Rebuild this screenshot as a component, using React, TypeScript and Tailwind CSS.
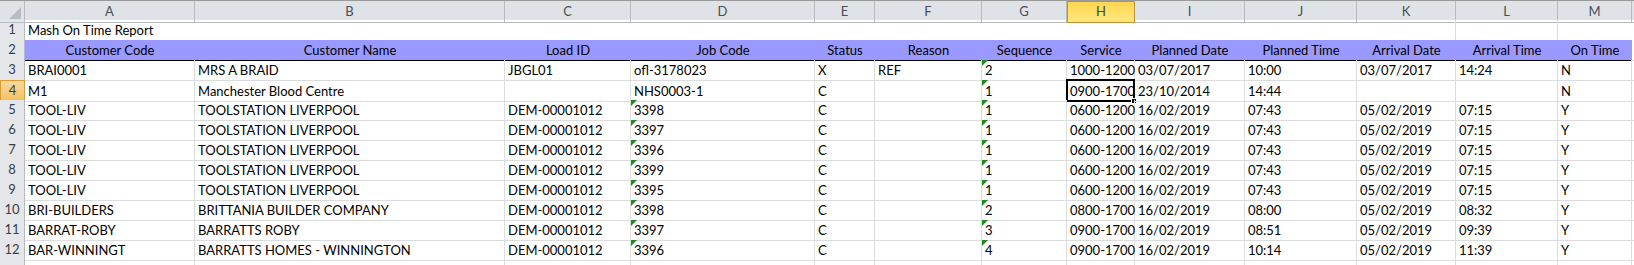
const cols = ['A', 'B', 'C', 'D', 'E', 'F', 'G', 'H', 'I', 'J', 'K', 'L', 'M'];

const headers = [
  'Customer Code',
  'Customer Name',
  'Load ID',
  'Job Code',
  'Status',
  'Reason',
  'Sequence',
  'Service',
  'Planned Date',
  'Planned Time',
  'Arrival Date',
  'Arrival Time',
  'On Time',
];

const rows: string[][] = [
  ['BRAI0001', 'MRS A BRAID', 'JBGL01', 'ofl-3178023', 'X', 'REF', '2', '1000-1200', '03/07/2017', '10:00', '03/07/2017', '14:24', 'N'],
  ['M1', 'Manchester Blood Centre', '', 'NHS0003-1', 'C', '', '1', '0900-1700', '23/10/2014', '14:44', '', '', 'N'],
  ['TOOL-LIV', 'TOOLSTATION LIVERPOOL', 'DEM-00001012', '3398', 'C', '', '1', '0600-1200', '16/02/2019', '07:43', '05/02/2019', '07:15', 'Y'],
  ['TOOL-LIV', 'TOOLSTATION LIVERPOOL', 'DEM-00001012', '3397', 'C', '', '1', '0600-1200', '16/02/2019', '07:43', '05/02/2019', '07:15', 'Y'],
  ['TOOL-LIV', 'TOOLSTATION LIVERPOOL', 'DEM-00001012', '3396', 'C', '', '1', '0600-1200', '16/02/2019', '07:43', '05/02/2019', '07:15', 'Y'],
  ['TOOL-LIV', 'TOOLSTATION LIVERPOOL', 'DEM-00001012', '3399', 'C', '', '1', '0600-1200', '16/02/2019', '07:43', '05/02/2019', '07:15', 'Y'],
  ['TOOL-LIV', 'TOOLSTATION LIVERPOOL', 'DEM-00001012', '3395', 'C', '', '1', '0600-1200', '16/02/2019', '07:43', '05/02/2019', '07:15', 'Y'],
  ['BRI-BUILDERS', 'BRITTANIA BUILDER COMPANY', 'DEM-00001012', '3398', 'C', '', '2', '0800-1700', '16/02/2019', '08:00', '05/02/2019', '08:32', 'Y'],
  ['BARRAT-ROBY', 'BARRATTS ROBY', 'DEM-00001012', '3397', 'C', '', '3', '0900-1700', '16/02/2019', '08:51', '05/02/2019', '09:39', 'Y'],
  ['BAR-WINNINGT', 'BARRATTS HOMES - WINNINGTON', 'DEM-00001012', '3396', 'C', '', '4', '0900-1700', '16/02/2019', '10:14', '05/02/2019', '11:39', 'Y'],
];

const gridCols =
  'grid grid-cols-[25px_170px_310px_126px_184px_60px_107px_85px_68px_110px_112px_99px_102px_74px_1fr]';

function Triangle() {
  return (
    <span className="absolute left-0 top-0 h-0 w-0 border-t-[6px] border-r-[6px] border-t-[#1d8a1d] border-r-transparent" />
  );
}

export default function App() {
  return (
    <div
      className="h-[265px] w-[1634px] overflow-hidden bg-white text-[13px] text-black"
      style={{ fontFamily: 'Lato, "Liberation Sans", sans-serif' }}
    >
      {/* column letters */}
      <div className={`${gridCols} h-5 border-t border-[#9a9a9a] bg-[#dfe2e6]`}>
        <div className="relative border-r border-b border-[#b6bbc1]">
          <span className="absolute bottom-[3px] right-[3px] h-0 w-0 border-b-[12px] border-l-[12px] border-b-[#b9bdc2] border-l-transparent" />
        </div>
        {cols.map((c) =>
          c === 'H' ? (
            <div
              key={c}
              className="flex items-center justify-center border border-[#c8902e] bg-gradient-to-b from-[#ffd64f] to-[#ffe97d] text-[#3d4b3a]"
            >
              {c}
            </div>
          ) : (
            <div key={c} className="flex items-center justify-center border-r border-b border-[#b6bbc1] text-[#4a4f55]">
              {c}
            </div>
          )
        )}
        <div className="border-b border-[#b6bbc1]" />
      </div>

      {/* row 1 */}
      <div className={`${gridCols} h-5`}>
        <div className="flex items-center justify-center border-r border-b border-[#b6bbc1] bg-[#e4e6e9] text-[#3b3f44]">1</div>
        <div className="col-span-10 flex items-end border-b border-[#dadcdd] pb-px pl-[3px] leading-[18px]">Mash On Time Report</div>
        <div className="border-r border-b border-[#dadcdd]" />
        <div className="border-r border-b border-[#dadcdd]" />
        <div className="border-b border-[#dadcdd]" />
      </div>

      {/* row 2 - headers */}
      <div className={`${gridCols} h-5`}>
        <div className="flex items-center justify-center border-r border-b border-[#b6bbc1] bg-[#e4e6e9] text-[#3b3f44]">2</div>
        {headers.map((h) => (
          <div key={h} className="flex items-end justify-center border-b border-black bg-[#9999ff] pb-px leading-[18px]">
            {h}
          </div>
        ))}
        <div className="border-b border-[#dadcdd]" />
      </div>

      {/* data rows */}
      {rows.map((r, i) => {
        const n = i + 3;
        const selRow = n === 4;
        return (
          <div key={n} className={`${gridCols} h-5`}>
            {selRow ? (
              <div className="flex items-center justify-center border border-[#e2992f] bg-gradient-to-b from-[#f9d99f] to-[#f1c15f] text-[#3b3f44]">
                {n}
              </div>
            ) : (
              <div className="flex items-center justify-center border-r border-b border-[#b6bbc1] bg-[#e4e6e9] text-[#3b3f44]">
                {n}
              </div>
            )}
            {r.map((v, j) => {
              const tri = j === 6 || (j === 3 && n >= 5);
              const sel = selRow && j === 7;
              return (
                <div
                  key={j}
                  className="relative flex items-end whitespace-nowrap border-r border-b border-[#dadcdd] pb-px pl-[3px] leading-[18px]"
                >
                  {tri && <Triangle />}
                  {v}
                  {sel && (
                    <span className="absolute -left-px -top-px -right-px -bottom-px border-2 border-black">
                      <span className="absolute -bottom-[4px] -right-[4px] h-[6px] w-[6px] border border-white bg-black" />
                    </span>
                  )}
                </div>
              );
            })}
            <div className="border-b border-[#dadcdd]" />
          </div>
        );
      })}

      {/* row 13 (partial) */}
      <div className={`${gridCols} h-5`}>
        <div className="border-r border-[#b6bbc1] bg-[#e4e6e9]" />
        {cols.map((c) => (
          <div key={c} className="border-r border-[#dadcdd]" />
        ))}
        <div />
      </div>
    </div>
  );
}
